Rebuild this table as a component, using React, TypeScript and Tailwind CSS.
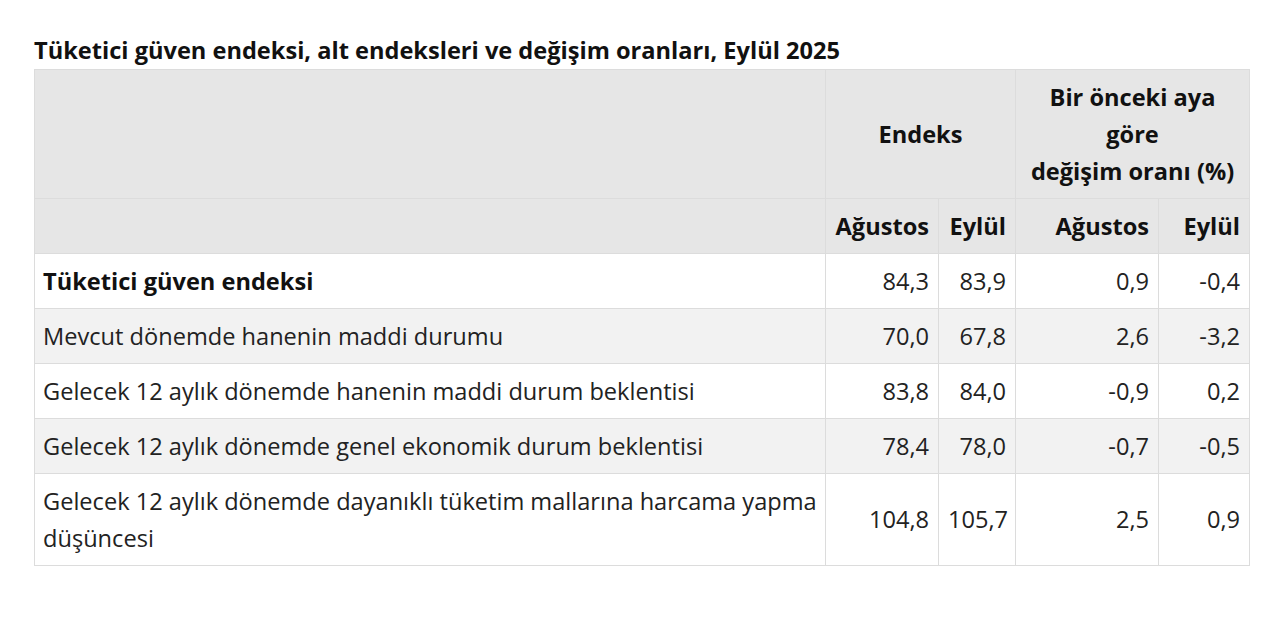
import React from 'react';

const rows = [
  { label: 'Tüketici güven endeksi', bold: true, v: ['84,3', '83,9', '0,9', '-0,4'] },
  { label: 'Mevcut dönemde hanenin maddi durumu', v: ['70,0', '67,8', '2,6', '-3,2'] },
  { label: 'Gelecek 12 aylık dönemde hanenin maddi durum beklentisi', v: ['83,8', '84,0', '-0,9', '0,2'] },
  { label: 'Gelecek 12 aylık dönemde genel ekonomik durum beklentisi', v: ['78,4', '78,0', '-0,7', '-0,5'] },
  {
    label: 'Gelecek 12 aylık dönemde dayanıklı tüketim mallarına harcama yapma düşüncesi',
    v: ['104,8', '105,7', '2,5', '0,9'],
  },
];

export default function App() {
  return (
    <div className="min-h-screen bg-white px-[34px] pt-[32px] font-['Open_Sans','Noto_Sans',sans-serif] text-[23.6px] leading-[37px] text-[#222]">
      <h2 className="text-[23.6px] font-bold leading-[37px] text-[#111]">
        Tüketici güven endeksi, alt endeksleri ve değişim oranları, Eylül 2025
      </h2>
      <table className="w-[1215px] table-fixed border-collapse border border-[#dcdcdc]">
        <colgroup>
          <col className="w-[791px]" />
          <col className="w-[113px]" />
          <col className="w-[77px]" />
          <col className="w-[143px]" />
          <col className="w-[91px]" />
        </colgroup>
        <thead className="bg-[#e6e6e6] font-bold text-[#111]">
          <tr>
            <th className="border border-[#dcdcdc] px-[9px] py-[8.5px]"></th>
            <th colSpan={2} className="border border-[#dcdcdc] px-[9px] py-[8.5px] text-center">
              Endeks
            </th>
            <th colSpan={2} className="border border-[#dcdcdc] px-[9px] py-[8.5px] text-center">
              Bir önceki aya
              <br />
              göre
              <br />
              değişim oranı (%)
            </th>
          </tr>
          <tr>
            <th className="border border-[#dcdcdc] px-[9px] py-[8.5px]"></th>
            <th className="border border-[#dcdcdc] px-[9px] py-[8.5px] text-right">Ağustos</th>
            <th className="border border-[#dcdcdc] px-[9px] py-[8.5px] text-right">Eylül</th>
            <th className="border border-[#dcdcdc] px-[9px] py-[8.5px] text-right">Ağustos</th>
            <th className="border border-[#dcdcdc] px-[9px] py-[8.5px] text-right">Eylül</th>
          </tr>
        </thead>
        <tbody>
          {rows.map((r, i) => (
            <tr key={r.label} className={i % 2 === 1 ? 'bg-[#f2f2f2]' : 'bg-white'}>
              <td
                className={`border border-[#dcdcdc] py-[8.5px] pl-[8px] pr-[4px] text-left ${r.bold ? 'font-bold text-[#111]' : ''}`}
              >
                {r.label}
              </td>
              {r.v.map((n, j) => (
                <td key={j} className="border border-[#dcdcdc] px-[9px] py-[8.5px] text-right">
                  {n}
                </td>
              ))}
            </tr>
          ))}
        </tbody>
      </table>
    </div>
  );
}
